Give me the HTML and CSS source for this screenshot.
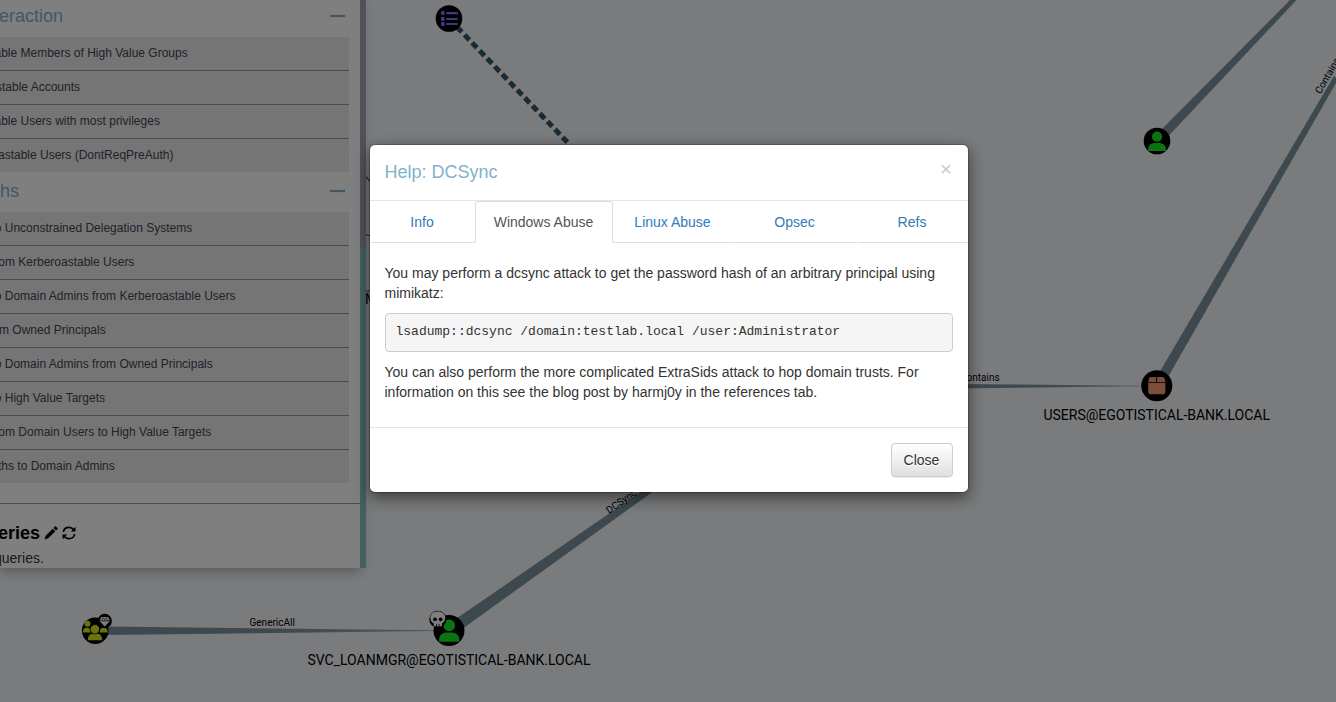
FILE: index.html
```html
<!DOCTYPE html>
<html lang="en">
<head>
<meta charset="utf-8">
<title>BloodHound</title>
<link rel="stylesheet" href="styles.css">
</head>
<body>
<svg class="graph" width="1336" height="702" viewBox="0 0 1336 702">
  <defs>
    <linearGradient id="fadeRight" x1="0" x2="1" y1="0" y2="0"><stop offset="0.5" stop-color="#7b929e"/><stop offset="1" stop-color="#7b929e" stop-opacity="0.7"/></linearGradient>
    <g id="person"><circle cx="0" cy="-4.3" r="5.1"/><path d="M-8.9 10V8.500C-8.9 4-5.5 2-2 2h4c3.500 0 6.900 2 6.900 6.500V10z"/></g>
  </defs>
  <g class="edges">
    <path d="M1153.500 137.500 1160.500 144.500 1296.500 0 1290 0z"/>
    <path d="M1152.500 384 1161.500 388.500 1338 79.500 1334 76z"/>
    <path d="M445.500 626 452.500 636 660 486.500 656.500 481z"/>
    <path fill="url(#fadeRight)" d="M950 384v4.400L1142 386.300V385.700z"/>
    <path fill="url(#fadeRight)" d="M106 626.500v8.500L434 631V630.200z"/>
  </g>
  <path class="dashed" d="M457 27 570 145"/>
  <path class="thin" d="M364 175 372 183M364 234 372 236.500M364 292 372 290"/>
  <g class="edge-label">
    <text x="249.500" y="626">GenericAll</text>
    <text x="960" y="381">Contains</text>
    <text transform="translate(609 514) rotate(-35)">DCSync</text>
    <text transform="translate(1320.500 94.500) rotate(-60)">Contains</text>
  </g>
  <g class="node-label">
    <text x="307.500" y="665" textLength="283">SVC_LOANMGR@EGOTISTICAL-BANK.LOCAL</text>
    <text x="1043.500" y="420" textLength="226.500">USERS@EGOTISTICAL-BANK.LOCAL</text>
    <text x="365" y="304">M</text>
  </g>
  <g transform="translate(449 18.500)">
    <circle r="13.300"/>
    <g fill="#7f72fd"><rect x="-8" y="-7.500" width="3.600" height="4" rx="1"/><rect x="-8" y="-1.600" width="3.600" height="4" rx="1"/><rect x="-8" y="3.600" width="3.600" height="4" rx="1"/><rect x="-3" y="-6.400" width="12" height="2.100" rx="1"/><rect x="-3" y="-0.500" width="12" height="2.100" rx="1"/><rect x="-3" y="4.500" width="12" height="2.100" rx="1"/></g>
  </g>
  <g transform="translate(1157 141)"><circle r="13.300"/><use href="#person" fill="#17e625"/></g>
  <g transform="translate(1156.800 385.700)">
    <circle r="15.500"/>
    <path fill="#f79a78" d="M-6-8.800H-.7v5H-8.600L-8-6.800Q-7.500-8.800-6-8.800zM.3-8.800H5.800Q7.500-8.800 8-6.800L8.500-3.800H.3zM-8.600-2.900H8.500V6.500q0 2-2 2h-13q-2 0-2-2z"/>
  </g>
  <g transform="translate(95.200 630.700)">
    <circle r="13.300"/>
    <g fill="#dbe617"><circle cx="-7.700" cy="-7" r="3"/><circle cx="7.700" cy="-7" r="3"/><path d="M-12.300 1.700c0-3.600 1.500-4.700 4-4.700 2 0 3 .5 3.400 2l.6 2.700zM12.500 1.700c0-3.600-1.500-4.700-4-4.700-2 0-3 .5-3.400 2l-.6 2.700z"/><path d="M-7.400 9.500c0-4.500 2.400-6.500 5-6.500H2c2.700 0 5 2 5 6.500z"/></g>
    <circle cx="-.3" cy="-1.500" r="4.700" fill="#dbe617" stroke="#000" stroke-width=".8"/>
    <g transform="translate(9.500 -9.700)"><circle r="7.200"/><path fill="#fff" d="M-3.300-4H3.300L5.300-.6H-5.300zM-5 .2H5L0 5.500z"/><path d="M-3-1 -1.600-3.300 0-1.200 1.600-3.300 3-1" fill="none" stroke="#000" stroke-width=".6"/></g>
  </g>
  <g transform="translate(449 630.500)">
    <circle r="15.500"/><use href="#person" transform="translate(.2 -.2) scale(1.140)" fill="#17e625"/>
    <g transform="translate(-11.200 -11.200)"><circle r="8.500"/><path fill="#fff" d="M0-7.700C4.700-7.700 7.500-5 7.500-1.300 7.500 1.500 6 3 4.200 3.900L4 6.900H-4L-4.200 3.900C-6 3-7.500 1.500-7.500-1.300-7.500-5-4.700-7.700 0-7.700z"/><circle cx="-2.800" cy="0" r="1.900"/><circle cx="2.800" cy="0" r="1.900"/><path d="M-1.300 4.500V7M1.300 4.500V7" stroke="#000" stroke-width=".8"/></g>
  </g>
</svg>

<aside class="panel">
  <div class="panel-content">
    <div class="group-head head-first"><span class="cut-e">eraction</span><i class="minus"></i></div>
    <ul class="queries">
      <li><span class="cut-a">able Members of High Value Groups</span></li>
      <li><span class="cut-s">stable Accounts</span></li>
      <li><span class="cut-a">able Users with most privileges</span></li>
      <li><span class="cut-st">astable Users (DontReqPreAuth)</span></li>
    </ul>
    <div class="group-head"><span class="cut-t">ths</span><i class="minus"></i></div>
    <ul class="queries">
      <li><span class="cut-o">o Unconstrained Delegation Systems</span></li>
      <li><span class="cut-m">om Kerberoastable Users</span></li>
      <li><span class="cut-o">o Domain Admins from Kerberoastable Users</span></li>
      <li><span class="cut-e">m Owned Principals</span></li>
      <li><span class="cut-o">o Domain Admins from Owned Principals</span></li>
      <li><span class="cut-o">o High Value Targets</span></li>
      <li><span class="cut-m">om Domain Users to High Value Targets</span></li>
      <li><span class="cut-st">ths to Domain Admins</span></li>
    </ul>
    <div class="custom">
      <h4><span class="cut-st">eries</span>
        <svg width="14" height="14" viewBox="0 0 14 14"><path d="M.5 13.500 1.700 9.800 8.800 2.700 11.300 5.200 4.200 12.300zM9.600 1.900 11 .5q.5-.5 1 0L13.500 2q.5.500 0 1L12.100 4.400z"/></svg>
        <svg width="14" height="14" viewBox="0 0 14 14"><path fill="none" stroke="#000" stroke-width="1.700" d="M1.400 6C1.800 3 4.200 1.300 7 1.300c2 0 3.500.8 4.600 2.300M12.600 8C12.200 11 9.800 12.700 7 12.700c-2 0-3.500-.8-4.600-2.300"/><path d="M13.500.8V5.500H8.800zM.5 13.200V8.500H5.200z"/></svg>
      </h4>
      <p>queries.</p>
    </div>
  </div>
  <div class="handle"></div>
</aside>

<div class="backdrop"></div>

<div class="modal">
  <header class="modal-header"><h4>Help: DCSync</h4><button class="close" aria-label="Close dialog">×</button></header>
  <nav class="tabs">
    <a>Info</a><a class="active">Windows Abuse</a><a>Linux Abuse</a><a>Opsec</a><a>Refs</a>
  </nav>
  <div class="modal-body">
    <p>You may perform a dcsync attack to get the password hash of an arbitrary principal using mimikatz:</p>
    <pre>lsadump::dcsync /domain:testlab.local /user:Administrator</pre>
    <p>You can also perform the more complicated ExtraSids attack to hop domain trusts. For information on this see the blog post by harmj0y in the references tab.</p>
  </div>
  <footer class="modal-footer"><button class="btn">Close</button></footer>
</div>
</body>
</html>
```
FILE: styles.css
```css
* { box-sizing: border-box; }
html, body { height: 100%; }
body {
  margin: 0;
  overflow: hidden;
  background: #f4f6f9;
  color: #333;
  font: 14px/20px "Liberation Sans", Arial, sans-serif;
}
h4, p, ul, pre { margin: 0; padding: 0; font-weight: 400; }

.graph { position: absolute; inset: 0; }
.edges { fill: #7b929e; }
.dashed { stroke: #36566a; stroke-width: 5; stroke-dasharray: 7 3.900; fill: none; }
.thin { stroke: #36566a; stroke-width: 1.200; fill: none; }
.edge-label { font: 10px Roboto, sans-serif; }
.node-label { font: 14px Roboto, sans-serif; }

.panel { position: relative; display: flex; width: 366px; height: 568px; }
.panel-content {
  width: 360px;
  overflow: hidden;
  background: #fff;
  box-shadow: 0 3px 12px rgba(0, 0, 0, .3);
}
.handle { position: relative; width: 6px; background: linear-gradient(#a3a4ae 247px, #8ac0c4 247px); }
.group-head {
  display: flex;
  align-items: center;
  justify-content: space-between;
  height: 40px;
  padding: 0 16px 2px 0;
  color: #7fb2cb;
  font-size: 18px;
}
.head-first { height: 37px; padding-bottom: 5px; }
.minus { width: 15px; height: 2px; margin-right: -1px; background: #7fb2cb; box-shadow: 0 0 1px #7fb2cb; }
.queries { width: 349px; list-style: none; font-size: 12px; color: #445; }
.queries li {
  height: 34px;
  padding-top: 6px;
  border-bottom: 1px solid #999;
  background: #ebebeb;
  white-space: nowrap;
}
.queries li:last-child { height: 33px; border-bottom: 0; }
.cut-a { margin-left: -5.500px; }
.cut-s { margin-left: -4px; }
.cut-st { margin-left: -2px; }
.cut-o { margin-left: -5.300px; }
.cut-m { margin-left: -1.700px; }
.cut-e { margin-left: -1px; }
.cut-t { margin-left: -5px; }
.custom { margin-top: 20px; padding-top: 18px; border-top: 1px solid #999; }
.custom h4 { display: flex; align-items: center; gap: 4px; height: 22px; color: #000; font-size: 18px; font-weight: 700; }
.custom p { margin: 4px 0 0 -6px; }

.backdrop { position: absolute; inset: 0; background: rgba(0, 0, 0, .5); }

.modal {
  position: absolute;
  top: 144px;
  left: 368.500px;
  width: 600px;
  border: 1px solid rgba(0, 0, 0, .2);
  border-radius: 6px;
  background: #fff;
  background-clip: padding-box;
  box-shadow: 0 5px 15px rgba(0, 0, 0, .5);
}
.modal-header {
  display: flex;
  justify-content: space-between;
  height: 56px;
  padding: 14px 15px 0;
  border-bottom: 1px solid #e5e5e5;
}
.modal-header h4 { color: #7fb2cb; font-size: 18px; line-height: 26px; }
.close { align-self: flex-start; width: 13px; height: 21px; margin-top: -1px; padding: 0; border: 0; background: none; color: #ccc; font: 21px/21px "Liberation Sans", sans-serif; }
.tabs { display: grid; grid-template-columns: 105px 138px 120px 124px 111px; height: 42px; }
.tabs a { padding: 10px 0; border: 1px solid transparent; border-bottom-color: #ddd; border-radius: 4px 4px 0 0; color: #337ab7; text-align: center; }
.tabs .active { border-color: #ddd #ddd #fff; color: #555; }
.modal-body { padding: 20px 15px 25px; }
.modal-body pre {
  height: 39px;
  margin: 10px 0;
  padding: 8.500px 10px;
  border: 1px solid #ccc;
  border-radius: 4px;
  background: #f5f5f5;
  font: 13px/18.570px "Liberation Mono", monospace;
}
.modal-footer { padding: 15px; border-top: 1px solid #e5e5e5; text-align: right; }
.btn {
  display: block;
  width: 62px;
  height: 34px;
  margin-left: auto;
  padding: 0;
  border: 1px solid #ccc;
  border-radius: 4px;
  background: linear-gradient(#fff, #e0e0e0);
  box-shadow: inset 0 1px 0 rgba(255, 255, 255, .15), 0 1px 1px rgba(0, 0, 0, .075);
  color: #333;
  font: 14px/20px "Liberation Sans", Arial, sans-serif;
  text-shadow: 0 1px 0 #fff;
}
```
